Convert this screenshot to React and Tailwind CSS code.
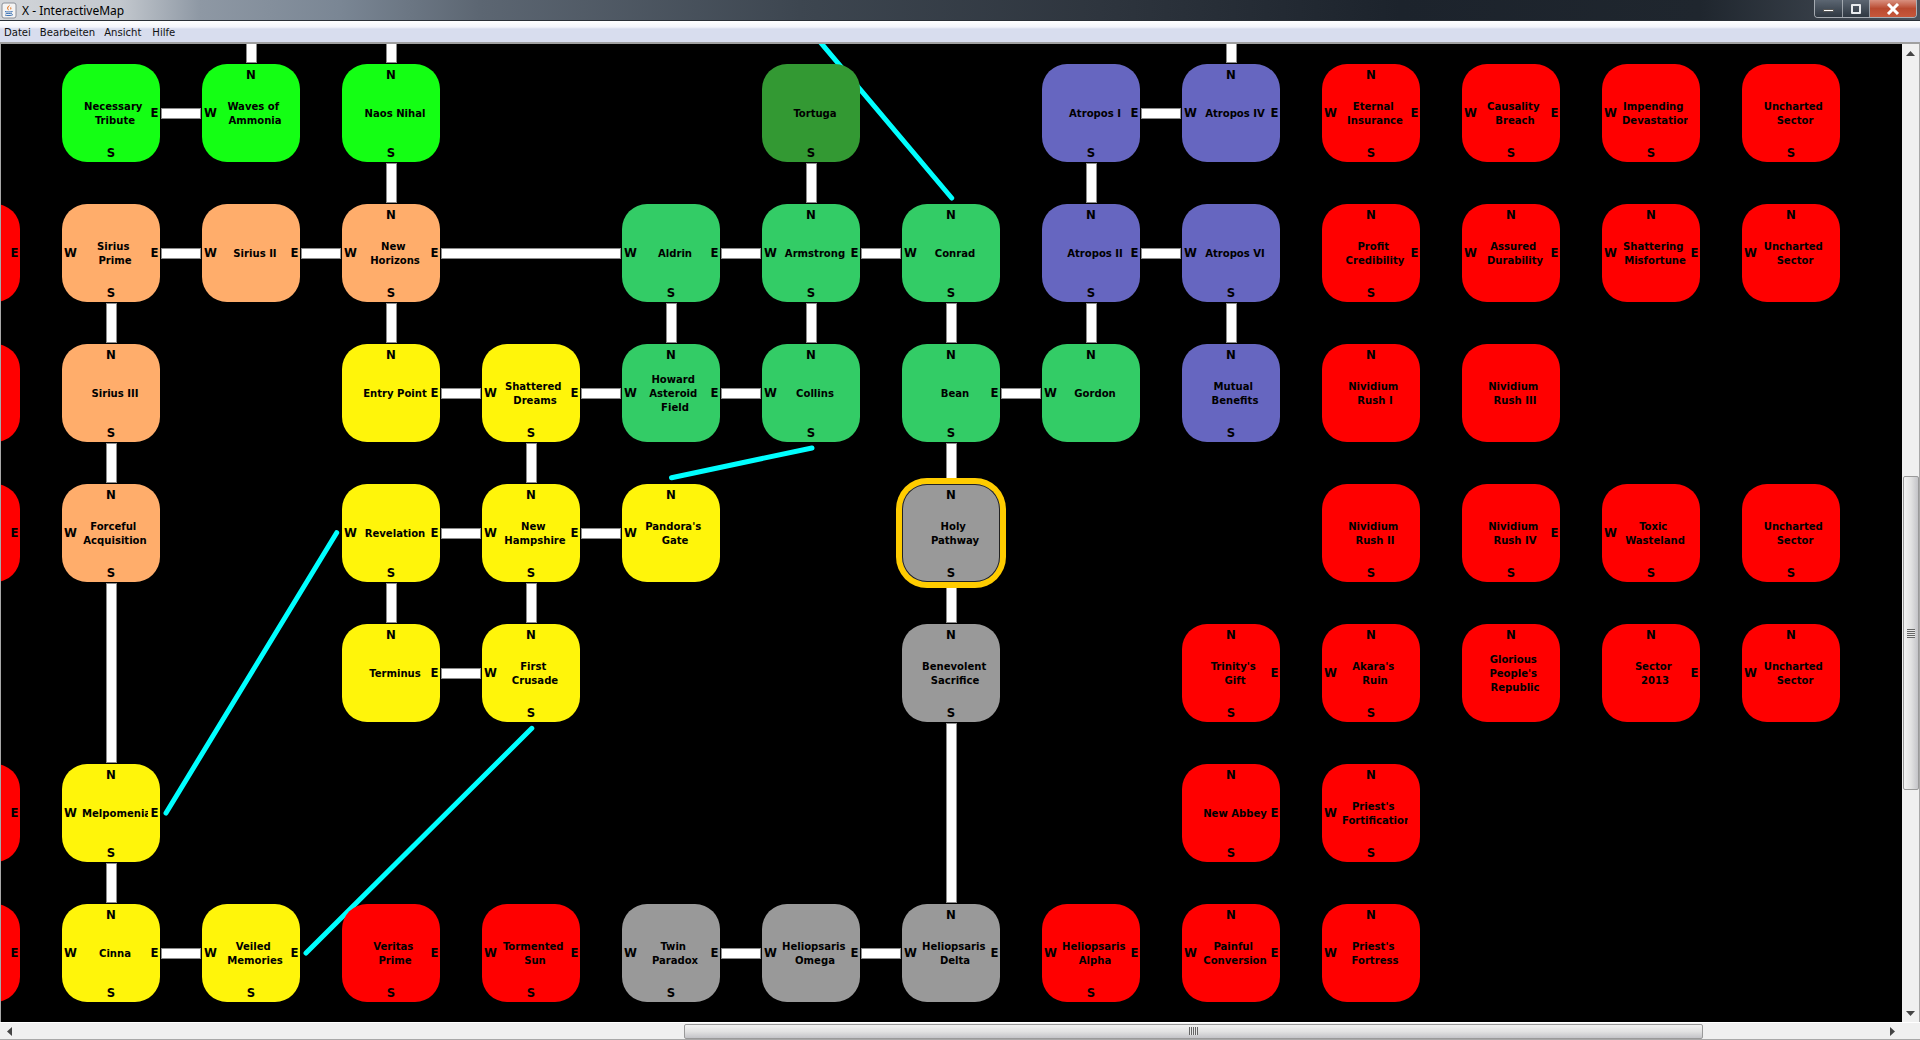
import { Fragment } from 'react'

const GREEN = 'bg-[#14ff14]'
const DARK = 'bg-[#339933]'
const ORANGE = 'bg-[#ffad6b]'
const TEAL = 'bg-[#33cc66]'
const PURPLE = 'bg-[#6666c0]'
const YELLOW = 'bg-[#fff50a]'
const GRAY = 'bg-[#999999]'
const RED = 'bg-[#ff0000]'

// [col, row, colour, ports, label lines]
const NODES = [
  [1, 0, GREEN, 'ES', ['Necessary', 'Tribute']],
  [2, 0, GREEN, 'NW', ['Waves of', 'Ammonia']],
  [3, 0, GREEN, 'NS', ['Naos Nihal']],
  [6, 0, DARK, 'S', ['Tortuga']],
  [8, 0, PURPLE, 'ES', ['Atropos I']],
  [9, 0, PURPLE, 'NWE', ['Atropos IV']],
  [10, 0, RED, 'NWES', ['Eternal', 'Insurance']],
  [11, 0, RED, 'WES', ['Causality', 'Breach']],
  [12, 0, RED, 'WS', ['Impending', 'Devastation']],
  [13, 0, RED, 'S', ['Uncharted', 'Sector']],

  [0, 1, RED, 'E', ['']],
  [1, 1, ORANGE, 'WES', ['Sirius', 'Prime']],
  [2, 1, ORANGE, 'WE', ['Sirius II']],
  [3, 1, ORANGE, 'NWES', ['New', 'Horizons']],
  [5, 1, TEAL, 'WES', ['Aldrin']],
  [6, 1, TEAL, 'NWES', ['Armstrong']],
  [7, 1, TEAL, 'NWS', ['Conrad']],
  [8, 1, PURPLE, 'NES', ['Atropos II']],
  [9, 1, PURPLE, 'WS', ['Atropos VI']],
  [10, 1, RED, 'NES', ['Profit', 'Credibility']],
  [11, 1, RED, 'NWE', ['Assured', 'Durability']],
  [12, 1, RED, 'NWE', ['Shattering', 'Misfortune']],
  [13, 1, RED, 'NW', ['Uncharted', 'Sector']],

  [0, 2, RED, '', ['']],
  [1, 2, ORANGE, 'NS', ['Sirius III']],
  [3, 2, YELLOW, 'NE', ['Entry Point']],
  [4, 2, YELLOW, 'WES', ['Shattered', 'Dreams']],
  [5, 2, TEAL, 'NWE', ['Howard', 'Asteroid', 'Field']],
  [6, 2, TEAL, 'NWS', ['Collins']],
  [7, 2, TEAL, 'NES', ['Bean']],
  [8, 2, TEAL, 'NW', ['Gordon']],
  [9, 2, PURPLE, 'NS', ['Mutual', 'Benefits']],
  [10, 2, RED, 'N', ['Nividium', 'Rush I']],
  [11, 2, RED, '', ['Nividium', 'Rush III']],

  [0, 3, RED, 'E', ['']],
  [1, 3, ORANGE, 'NWS', ['Forceful', 'Acquisition']],
  [3, 3, YELLOW, 'WES', ['Revelation']],
  [4, 3, YELLOW, 'NWES', ['New', 'Hampshire']],
  [5, 3, YELLOW, 'NW', ["Pandora's", 'Gate']],
  [7, 3, GRAY, 'NS', ['Holy', 'Pathway'], true],
  [10, 3, RED, 'S', ['Nividium', 'Rush II']],
  [11, 3, RED, 'ES', ['Nividium', 'Rush IV']],
  [12, 3, RED, 'WS', ['Toxic', 'Wasteland']],
  [13, 3, RED, 'S', ['Uncharted', 'Sector']],

  [3, 4, YELLOW, 'NE', ['Terminus']],
  [4, 4, YELLOW, 'NWS', ['First', 'Crusade']],
  [7, 4, GRAY, 'NS', ['Benevolent', 'Sacrifice']],
  [9, 4, RED, 'NES', ["Trinity's", 'Gift']],
  [10, 4, RED, 'NWS', ["Akara's", 'Ruin']],
  [11, 4, RED, 'N', ['Glorious', "People's", 'Republic']],
  [12, 4, RED, 'NE', ['Sector', '2013']],
  [13, 4, RED, 'NW', ['Uncharted', 'Sector']],

  [0, 5, RED, 'E', ['']],
  [1, 5, YELLOW, 'NWES', ['Melpomenia']],
  [9, 5, RED, 'NES', ['New Abbey']],
  [10, 5, RED, 'NWS', ["Priest's", 'Fortification']],

  [0, 6, RED, 'E', ['']],
  [1, 6, YELLOW, 'NWES', ['Cinna']],
  [2, 6, YELLOW, 'WES', ['Veiled', 'Memories']],
  [3, 6, RED, 'ES', ['Veritas', 'Prime']],
  [4, 6, RED, 'WES', ['Tormented', 'Sun']],
  [5, 6, GRAY, 'WES', ['Twin', 'Paradox']],
  [6, 6, GRAY, 'WE', ['Heliopsaris', 'Omega']],
  [7, 6, GRAY, 'NWE', ['Heliopsaris', 'Delta']],
  [8, 6, RED, 'WES', ['Heliopsaris', 'Alpha']],
  [9, 6, RED, 'NWE', ['Painful', 'Conversion']],
  [10, 6, RED, 'NW', ["Priest's", 'Fortress']],
]

// [row, fromCol, toCol]
const H_LINKS = [
  [0, 1, 2], [0, 8, 9],
  [1, 1, 2], [1, 2, 3], [1, 3, 5], [1, 5, 6], [1, 6, 7], [1, 8, 9],
  [2, 3, 4], [2, 4, 5], [2, 5, 6], [2, 7, 8],
  [3, 3, 4], [3, 4, 5],
  [4, 3, 4],
  [6, 1, 2], [6, 5, 6], [6, 6, 7],
]

// [col, fromRow, toRow]
const V_LINKS = [
  [2, -1, 0], [3, -1, 0], [9, -1, 0],
  [3, 0, 1], [6, 0, 1], [8, 0, 1],
  [1, 1, 2], [3, 1, 2], [5, 1, 2], [6, 1, 2], [7, 1, 2], [8, 1, 2], [9, 1, 2],
  [1, 2, 3], [4, 2, 3], [7, 2, 3],
  [3, 3, 4], [4, 3, 4], [7, 3, 4],
  [1, 3, 5], [7, 4, 6], [1, 5, 6],
]

// jump lines, in canvas coordinates
const WARPS = [
  [804, -20, 950.7, 154],
  [811, 404, 670.5, 433.7],
  [165, 769, 335.7, 488.7],
  [305, 909, 530.8, 684.3],
]

const PORT_POS = {
  N: 'left-0 top-[3px] w-[98px]',
  S: 'left-0 top-[81px] w-[98px]',
  W: 'left-0 top-[41px] w-[17px]',
  E: 'left-[84px] top-[41px] w-[17px]',
}

const colX = c => c * 140 - 79
const rowY = r => r * 140 + 20

function Node({ node }) {
  const [col, row, color, ports, lines, selected] = node
  return (
    <div
      className={`absolute h-[98px] w-[98px] rounded-[25px] text-black ${color} ${selected ? 'shadow-[inset_0_0_0_1px_#222222,0_0_0_6px_#ffcc00]' : ''}`}
      style={{ left: colX(col), top: rowY(row) }}
    >
      {ports.split('').map(p => (
        <span key={p} className={`absolute text-center text-[13px] leading-[16px] font-bold ${PORT_POS[p]}`}>
          {p}
        </span>
      ))}
      <div className="absolute left-[20px] top-[1px] flex h-[98px] w-[66px] flex-col justify-center overflow-hidden text-center text-[11.2px] leading-[14px] font-bold whitespace-nowrap">
        {lines.map((l, i) => (
          <span key={i}>{i < lines.length - 1 ? l + '\u00a0' : l}</span>
        ))}
      </div>
    </div>
  )
}

function JavaIcon() {
  return (
    <svg width="16" height="17" viewBox="0 0 16 17">
      <rect x="1" y="1" width="14" height="15" rx="2" fill="#f4f4f4" stroke="#8a8f98" />
      <path d="M8.5 2.5c1 1.6-2 2.6-1.2 4.4.3.7.8 1 .9 1.6-1.4-.6-2.6-1.8-1.9-3.2.5-1 2.2-1.6 2.2-2.8z" fill="#e2721b" />
      <path d="M10.6 4.6c-1 .6-1.6 1.2-1.3 2 .2.5.5.8.3 1.3.9-.6 1-1.2.6-1.8-.3-.5-.2-1 .4-1.5z" fill="#e2721b" />
      <path d="M4 9.5c1.8.6 6 .6 7.6 0M4.6 11.2c1.5.5 5 .5 6.4 0M4 13c2 .8 6 .8 8-.4" fill="none" stroke="#3f74b5" strokeWidth="1" />
    </svg>
  )
}

function WindowButtons() {
  return (
    <div className="flex h-[18px] overflow-hidden rounded-b-[4px] border border-t-0 border-[#d5d9de]/70">
      <div className="flex w-[28px] items-center justify-center border-r border-[#d5d9de]/60 bg-gradient-to-b from-[#5c6672] to-[#2f3842]">
        <div className="mt-[4px] h-[3px] w-[11px] border border-[#555] bg-white" />
      </div>
      <div className="flex w-[27px] items-center justify-center border-r border-[#d5d9de]/60 bg-gradient-to-b from-[#5c6672] to-[#2f3842]">
        <div className="h-[10px] w-[10px] rounded-[1px] border-2 border-[#e8ebee]" />
      </div>
      <div className="flex w-[46px] items-center justify-center bg-gradient-to-b from-[#d8907f] via-[#b94a30] to-[#c7573b] text-[14px] leading-none font-bold text-white">
        <svg width="14" height="12" viewBox="0 0 14 12">
          <path d="M2 1l10 10M12 1L2 11" stroke="#fff" strokeWidth="3" />
        </svg>
      </div>
    </div>
  )
}

function Arrow({ dir }) {
  const shape = {
    up: 'M0 5L4.5 0 9 5z',
    down: 'M0 0L9 0 4.5 5z',
    left: 'M5 0L5 9 0 4.5z',
    right: 'M0 0L0 9 5 4.5z',
  }[dir]
  const size = dir === 'up' || dir === 'down' ? [9, 5] : [5, 9]
  return (
    <svg width={size[0]} height={size[1]} viewBox={`0 0 ${size[0]} ${size[1]}`}>
      <path d={shape} fill="#444" />
    </svg>
  )
}

export default function App() {
  return (
    <div className="flex h-[1040px] w-[1920px] flex-col overflow-hidden bg-[#f0f0f0] font-['Liberation_Sans',sans-serif]">
      {/* Title bar */}
      <div className="flex h-[21px] shrink-0 items-start justify-between border-b border-[#2a2f36] bg-[linear-gradient(90deg,#d2d5d9_0px,#c3c8ce_120px,#8e98a4_200px,#7a8694_340px,#5c6672_480px,#3d4650_800px,#2e353e_1100px,#1c232c_1400px,#1f262e_1700px,#4a525c_1920px)]">
        <div className="flex h-[20px] items-center gap-[5px] pl-[1px]">
          <JavaIcon />
          <span className="mt-[1px] font-['Noto_Sans',sans-serif] text-[12px] leading-none text-black">X - InteractiveMap</span>
        </div>
        <div className="pr-[3px]">
          <WindowButtons />
        </div>
      </div>

      {/* Menu */}
      <div className="flex h-[23px] shrink-0 items-center gap-[9px] border-b-2 border-[#a0a0a0] bg-[linear-gradient(180deg,#ffffff_0px,#f4f5fb_6px,#d8ddee_8px,#d8ddee_100%)] pt-[4px] pl-[4px] font-['DejaVu_Sans_Condensed','DejaVu_Sans',sans-serif] text-[11.2px] text-[#111]">
        <span>Datei</span>
        <span>Bearbeiten</span>
        <span className="mr-[2px]">Ansicht</span>
        <span>Hilfe</span>
      </div>

      <div className="flex min-h-0 flex-1 border-l border-[#a8a8a8]">
        {/* Map canvas */}
        <div className="relative min-w-0 flex-1 overflow-hidden bg-black font-['DejaVu_Sans_Condensed','DejaVu_Sans',sans-serif]">
          <svg className="absolute left-0 top-0" width="1901" height="978">
            {WARPS.map((w, i) => (
              <line key={i} x1={w[0]} y1={w[1]} x2={w[2]} y2={w[3]} stroke="#00ffff" strokeWidth="5" strokeLinecap="round" />
            ))}
          </svg>
          {H_LINKS.map(([r, a, b]) => (
            <div
              key={`h${r}-${a}`}
              className="absolute h-[11px] border border-[#8c8c8c] bg-white"
              style={{ left: colX(a) + 99, top: rowY(r) + 44, width: colX(b) - colX(a) - 100 }}
            />
          ))}
          {V_LINKS.map(([c, a, b]) => (
            <div
              key={`v${c}-${a}`}
              className="absolute w-[11px] border border-[#8c8c8c] bg-white"
              style={{ left: colX(c) + 44, top: rowY(a) + 99, height: rowY(b) - rowY(a) - 100 }}
            />
          ))}
          {NODES.map(n => (
            <Fragment key={`${n[0]}-${n[1]}`}>
              <Node node={n} />
            </Fragment>
          ))}
        </div>

        {/* Vertical scrollbar */}
        <div className="flex w-[18px] shrink-0 flex-col items-center border-r border-[#a8a8a8] bg-[#f0f0f0]">
          <div className="mt-[6px] flex h-[6px] items-center">
            <Arrow dir="up" />
          </div>
          <div className="mt-[420px] flex h-[314px] w-[16px] items-center justify-center rounded-[2px] border border-[#9a9a9a] bg-gradient-to-r from-[#f2f2f2] via-[#e2e2e2] to-[#c4c4c8]">
            <div className="h-[9px] w-[8px] bg-[repeating-linear-gradient(180deg,#666_0px,#666_1px,#e8e8e8_1px,#e8e8e8_2px)]" />
          </div>
          <div className="mt-auto mb-[6px] flex h-[6px] items-center">
            <Arrow dir="down" />
          </div>
        </div>
      </div>

      {/* Horizontal scrollbar */}
      <div className="flex h-[18px] shrink-0 items-center border-t border-white border-b border-b-[#a8a8a8] bg-[#f0f0f0] pl-[7px]">
        <Arrow dir="left" />
        <div className="ml-[672px] flex h-[15px] w-[1019px] items-center justify-center rounded-[2px] border border-[#9a9a9a] bg-gradient-to-b from-[#f2f2f2] via-[#e2e2e2] to-[#c4c4c8]">
          <div className="h-[8px] w-[9px] bg-[repeating-linear-gradient(90deg,#666_0px,#666_1px,#e8e8e8_1px,#e8e8e8_2px)]" />
        </div>
        <div className="ml-[187px]">
          <Arrow dir="right" />
        </div>
      </div>
    </div>
  )
}
